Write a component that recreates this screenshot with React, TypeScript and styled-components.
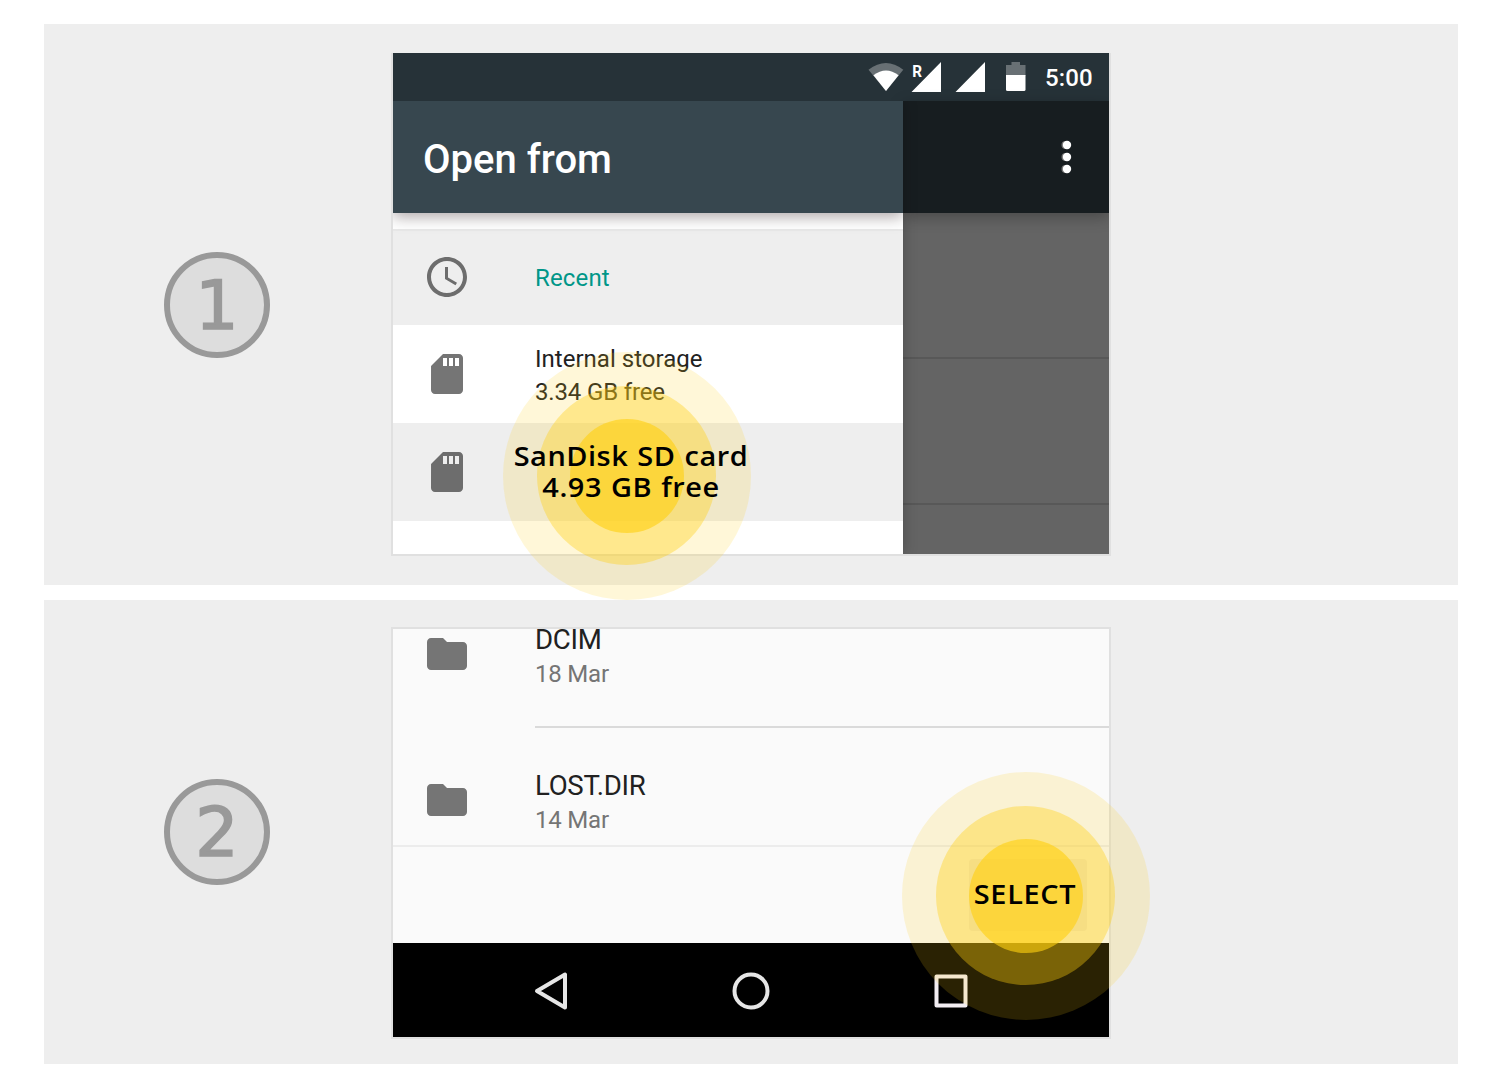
import React from "react";
import styled, { createGlobalStyle } from "styled-components";

const Global = createGlobalStyle`
  body { margin: 0; background: #fff; font-family: Roboto, "Liberation Sans", sans-serif; }
  * { box-sizing: border-box; }
  svg { display: block; flex: none; }
`;

const Page = styled.main`
  width: 1501px;
  height: 1089px;
  padding: 24px 43px 25px 44px;
  display: flex;
  flex-direction: column;
  gap: 15px;
`;

const Step = styled.section<{ $height: number; $top: number }>`
  position: relative;
  display: flex;
  align-items: flex-start;
  height: ${(p) => p.$height}px;
  padding: ${(p) => p.$top}px 0 0 120px;
  background: #eeeeee;
`;

const StepNumber = styled.div<{ $top: number }>`
  width: 106px;
  height: 106px;
  margin: ${(p) => p.$top}px 121px 0 0;
  border: 6px solid #999;
  border-radius: 50%;
  background: #ddd;
  color: #999;
  font: 68px/96px "DejaVu Sans", sans-serif;
  -webkit-text-stroke: 1.7px #999;
  text-align: center;
`;

const Screen = styled.div<{ $height: number; $topBorder?: boolean }>`
  width: 720px;
  height: ${(p) => p.$height}px;
  border: 2px solid #e0e0e0;
  ${(p) => (p.$topBorder ? "" : "border-top: 0;")}
  display: flex;
  flex-direction: column;
  overflow: hidden;
  background: #fafafa;
`;

const StatusBar = styled.div`
  height: 48px;
  flex: none;
  display: flex;
  align-items: center;
  justify-content: flex-end;
  padding-right: 16px;
  background: #263238;
  color: #fff;
`;

const Clock = styled.span`
  width: 48px;
  margin-left: 18px;
  font-size: 24px;
  font-weight: 500;
  line-height: 28px;
  letter-spacing: 0.15px;
  padding-top: 2px;
`;

const Body = styled.div`
  flex: 1;
  display: flex;
  min-height: 0;
`;

const Drawer = styled.div`
  width: 510px;
  display: flex;
  flex-direction: column;
  background: #fff;
  z-index: 1;
  box-shadow: 0 0 14px rgba(0, 0, 0, 0.24);
  clip-path: inset(0 -20px 0 0);
`;

const DrawerHeader = styled.header`
  height: 112px;
  flex: none;
  padding: 5px 0 0 30px;
  background: #37474f;
  color: #fff;
  font-size: 40px;
  font-weight: 500;
  line-height: 108px;
  z-index: 1;
  box-shadow: 0 4px 14px rgba(20, 0, 10, 0.34);
  clip-path: inset(0 0 -24px 0);
`;

const DrawerGap = styled.div`
  height: 18px;
  flex: none;
  border-bottom: 2px solid #e8e8e8;
`;

const Row = styled.div<{ $height: number; $shaded?: boolean; $lift?: number }>`
  height: ${(p) => p.$height}px;
  flex: none;
  display: flex;
  align-items: center;
  padding: 0 0 ${(p) => p.$lift ?? 0}px 30px;
  gap: 64px;
  background: ${(p) => (p.$shaded ? "#eeeeee" : "transparent")};
  color: #212121;
  font-size: 24px;
  line-height: 33px;
`;

const Accent = styled.span`
  color: #009688;
  padding-top: 2px;
  letter-spacing: 0.15px;
`;

const Labels = styled.div`
  padding-top: 3px;
`;

const Label = styled.div<{ $spacing: number }>`
  letter-spacing: ${(p) => p.$spacing}px;
`;

const Behind = styled.div`
  flex: 1;
  display: flex;
  flex-direction: column;
  background: #646464;
`;

const Toolbar = styled.div`
  height: 112px;
  flex: none;
  display: flex;
  align-items: center;
  justify-content: flex-end;
  padding-right: 36px;
  background: #171d20;
  box-shadow: 0 4px 14px rgba(0, 0, 0, 0.28);
`;

const DimRow = styled.div<{ $height: number }>`
  height: ${(p) => p.$height}px;
  flex: none;
  border-bottom: 2px solid #585858;
`;

const FileRow = styled.div<{ $height: number; $top: number }>`
  height: ${(p) => p.$height}px;
  flex: none;
  display: flex;
  align-items: flex-start;
  padding: ${(p) => p.$top}px 0 0 30px;
  gap: 64px;
`;

const FileInfo = styled.div`
  margin-top: -8px;
`;

const FileName = styled.div`
  color: #212121;
  font-size: 27.6px;
  line-height: 36px;
  letter-spacing: -0.3px;
`;

const FileDate = styled.div`
  margin-top: -1px;
  color: #757575;
  font-size: 24px;
  line-height: 34px;
  letter-spacing: -0.2px;
`;

const Divider = styled.div<{ $inset?: number }>`
  height: 2px;
  flex: none;
  margin-left: ${(p) => p.$inset ?? 0}px;
  background: ${(p) => (p.$inset ? "#dadada" : "#ececec")};
`;

const ActionBar = styled.div`
  height: 96px;
  flex: none;
  display: flex;
  justify-content: flex-end;
  padding: 12px 22px 0 0;
`;

const ActionButton = styled.div`
  width: 118px;
  height: 72px;
  border-radius: 4px;
  background: #eeeced;
`;

const NavBar = styled.nav`
  height: 94px;
  flex: none;
  display: flex;
  align-items: center;
  justify-content: center;
  gap: 160px;
  padding-top: 2px;
  background: #000;
`;

const Pulse = styled.div<{ $x: number; $y: number }>`
  position: absolute;
  z-index: 3;
  left: ${(p) => p.$x}px;
  top: ${(p) => p.$y}px;
  width: 248px;
  height: 248px;
  padding: 0 1px 1px 0;
  border-radius: 50%;
  display: grid;
  place-items: center;
  background: rgba(255, 208, 20, 0.165);
`;

const Ring = styled.div<{ $size: number; $alpha: number }>`
  width: ${(p) => p.$size}px;
  height: ${(p) => p.$size}px;
  border-radius: 50%;
  display: grid;
  place-items: center;
  background: rgba(255, 208, 16, ${(p) => p.$alpha});
`;

const Callout = styled.div<{ $x: number; $y: number; $width: number }>`
  position: absolute;
  z-index: 4;
  left: ${(p) => p.$x}px;
  top: ${(p) => p.$y}px;
  width: ${(p) => p.$width}px;
  color: #000;
  font: 600 27px/31px "Open Sans", "Noto Sans", sans-serif;
  text-align: center;
  white-space: nowrap;
  transform: scaleX(1.07);
`;

const CalloutLine = styled.div<{ $spacing: number }>`
  letter-spacing: ${(p) => p.$spacing}px;
  word-spacing: 1px;
`;

const Target = ({ x, y }: { x: number; y: number }) => (
  <Pulse $x={x} $y={y}>
    <Ring $size={179} $alpha={0.378}>
      <Ring $size={114} $alpha={0.615} />
    </Ring>
  </Pulse>
);

const StatusIcons = () => (
  <svg width="159" height="32" viewBox="868 61 159 32" fill="#fff">
    <path d="M868.5 69.8Q886 56.2 903.3 69.8L886 91Z" fill="#687074" />
    <path d="M873.4 75.2Q886 65.8 898.6 75.2L886 91Z" />
    <path d="M941 62v30h-29.5zM985 62v30h-29.5z" />
    <text x="912.2" y="76.7" fontFamily="Roboto" fontWeight="700" fontSize="17.300" textLength="9.8" lengthAdjust="spacingAndGlyphs">R</text>
    <path d="M1011.5 62h8.5v3h5.5v11H1006V65h5.5z" fill="#687074" />
    <path d="M1006 75h19.5v14.5q0 1.5-1.5 1.5h-16.500q-1.5 0-1.5-1.5z" />
  </svg>
);

const ClockIcon = () => (
  <svg width="48" height="48" viewBox="0 0 24 24" fill="#6d6d6d">
    <path d="M12 2C6.480 2 2 6.480 2 12s4.470 10 10 10c5.520 0 10-4.480 10-10S17.520 2 12 2zm0 18c-4.420 0-8-3.580-8-8s3.580-8 8-8 8 3.580 8 8-3.580 8-8 8zM12.500 7H11v6l5.250 3.150.750-1.230-4.500-2.670z" />
  </svg>
);

const CardIcon = ({ color = "#757575" }: { color?: string }) => (
  <svg width="48" height="48" viewBox="0 0 24 24" fill={color}>
    <path d="M18 2h-8L4.020 8 4 20c0 1.100.900 2 2 2h12c1.100 0 2-.900 2-2V4c0-1.100-.900-2-2-2zm-6 6h-2V4h2v4zm3 0h-2V4h2v4zm3 0h-2V4h2v4z" />
  </svg>
);

const FolderIcon = () => (
  <svg width="48" height="48" viewBox="0 0 24 24" fill="#757575">
    <path d="M10 4H4c-1.100 0-1.990.900-1.990 2L2 18c0 1.100.900 2 2 2h16c1.100 0 2-.900 2-2V8c0-1.100-.900-2-2-2h-8l-2-2z" />
  </svg>
);

const MoreIcon = () => (
  <svg width="12" height="34" viewBox="0 0 12 34">
    {[5, 17, 29].map((y) => (
      <g key={y}>
        <circle cx="4.500" cy={y} r="4" fill="#777" />
        <circle cx="6" cy={y} r="4.200" fill="#fff" />
      </g>
    ))}
  </svg>
);

export default function App() {
  return (
    <>
      <Global />
      <Page>
        <Step $height={561} $top={29}>
          <StepNumber $top={199}>1</StepNumber>
          <Screen $height={503}>
            <StatusBar>
              <StatusIcons />
              <Clock>5:00</Clock>
            </StatusBar>
            <Body>
              <Drawer>
                <DrawerHeader>Open from</DrawerHeader>
                <DrawerGap />
                <Row $height={94} $shaded $lift={2}>
                  <ClockIcon />
                  <Accent>Recent</Accent>
                </Row>
                <Row $height={98}>
                  <CardIcon />
                  <Labels>
                    <Label $spacing={0.02}>Internal storage</Label>
                    <Label $spacing={-0.15}>3.34 GB free</Label>
                  </Labels>
                </Row>
                <Row $height={98} $shaded>
                  <CardIcon color="#6d6d6d" />
                </Row>
              </Drawer>
              <Behind>
                <Toolbar>
                  <MoreIcon />
                </Toolbar>
                <DimRow $height={146} />
                <DimRow $height={146} />
              </Behind>
            </Body>
          </Screen>
          <Target x={459} y={328} />
          <Callout $x={467} $y={416} $width={240}>
            <CalloutLine $spacing={0.5}>SanDisk SD card</CalloutLine>
            <CalloutLine $spacing={0.5}>4.93 GB free</CalloutLine>
          </Callout>
        </Step>
        <Step $height={464} $top={27}>
          <StepNumber $top={152}>2</StepNumber>
          <Screen $height={412} $topBorder>
            <FileRow $height={97} $top={1}>
              <FolderIcon />
              <FileInfo>
                <FileName>DCIM</FileName>
                <FileDate>18 Mar</FileDate>
              </FileInfo>
            </FileRow>
            <Divider $inset={142} />
            <FileRow $height={117} $top={48}>
              <FolderIcon />
              <FileInfo>
                <FileName>LOST.DIR</FileName>
                <FileDate>14 Mar</FileDate>
              </FileInfo>
            </FileRow>
            <Divider />
            <ActionBar>
              <ActionButton />
            </ActionBar>
            <NavBar>
              <svg width="40" height="40" viewBox="0 0 40 40" fill="none" stroke="#e6e6e6" strokeWidth="4" strokeLinejoin="round">
                <path d="M34 3.500v33L6 20z" />
              </svg>
              <svg width="40" height="40" viewBox="0 0 40 40" fill="none" stroke="#e6e6e6" strokeWidth="4">
                <circle cx="20" cy="20" r="16.500" />
              </svg>
              <svg width="40" height="40" viewBox="0 0 40 40" fill="none" stroke="#f3eef3" strokeWidth="4" strokeLinejoin="round">
                <rect x="5.500" y="5.500" width="29" height="29" />
              </svg>
            </NavBar>
          </Screen>
          <Target x={858} y={172} />
          <Callout $x={926} $y={278} $width={110}>
            <CalloutLine $spacing={0.6}>SELECT</CalloutLine>
          </Callout>
        </Step>
      </Page>
    </>
  );
}
